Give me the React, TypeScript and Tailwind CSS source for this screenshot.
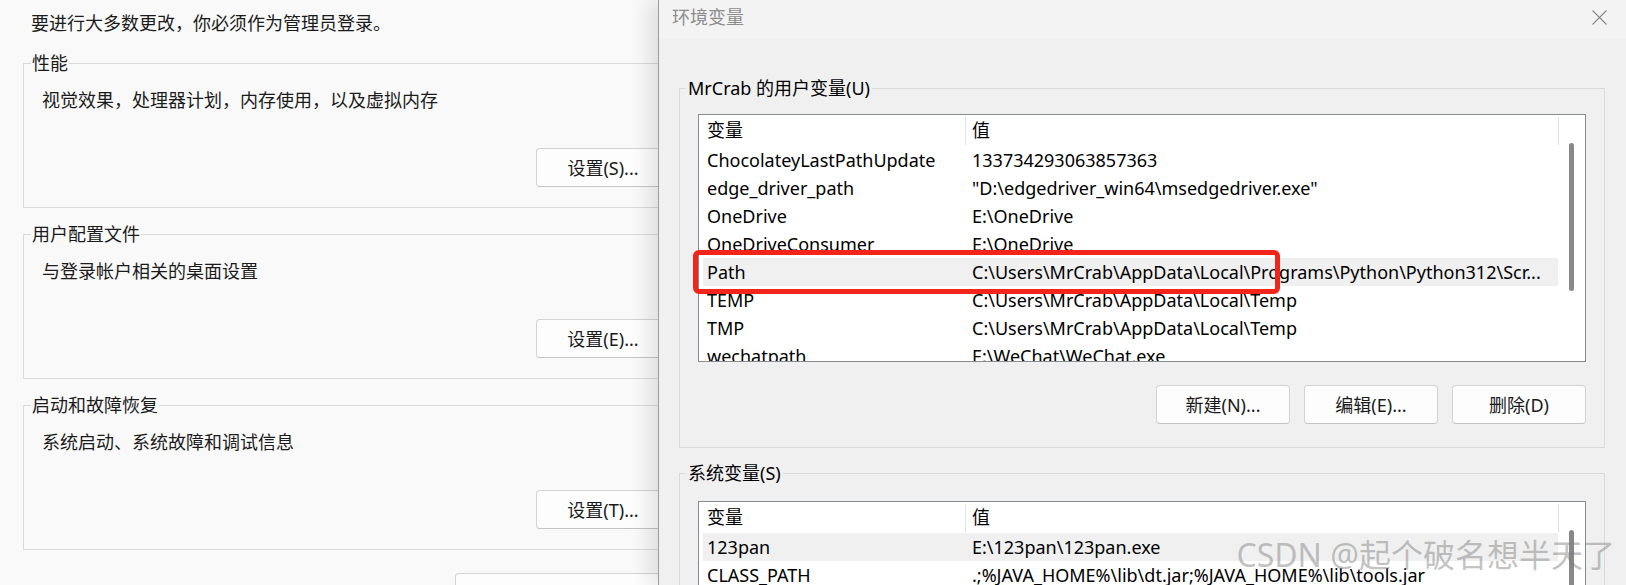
const userVars: [string, string][] = [
  ['ChocolateyLastPathUpdate', '133734293063857363'],
  ['edge_driver_path', '"D:\\edgedriver_win64\\msedgedriver.exe"'],
  ['OneDrive', 'E:\\OneDrive'],
  ['OneDriveConsumer', 'E:\\OneDrive'],
  ['Path', 'C:\\Users\\MrCrab\\AppData\\Local\\Programs\\Python\\Python312\\Scr...'],
  ['TEMP', 'C:\\Users\\MrCrab\\AppData\\Local\\Temp'],
  ['TMP', 'C:\\Users\\MrCrab\\AppData\\Local\\Temp'],
  ['wechatpath', 'E:\\WeChat\\WeChat.exe'],
];

const sysVars: [string, string][] = [
  ['123pan', 'E:\\123pan\\123pan.exe'],
  ['CLASS_PATH', '.;%JAVA_HOME%\\lib\\dt.jar;%JAVA_HOME%\\lib\\tools.jar'],
  ['ComSpec', 'C:\\Windows\\system32\\cmd.exe'],
  ['DriverData', 'C:\\Windows\\System32\\Drivers\\DriverData'],
];

function VarList({
  rows,
  selected,
  className,
  thumbClass,
}: {
  rows: [string, string][];
  selected: string;
  className: string;
  thumbClass: string;
}) {
  return (
    <div className={'ml-[12px] flex overflow-hidden border border-[#878b93] bg-white ' + className}>
      <div className="flex min-w-0 flex-1 flex-col">
        <div className="flex h-[31px] shrink-0 items-center">
          <div className="flex h-full w-[266px] items-center pl-[8px]">变量</div>
          <span className="h-[28px] w-px bg-[#e3e3e3]" />
          <div className="pl-[6px]">值</div>
        </div>
        {rows.map(([name, value]) => (
          <div
            key={name}
            className={
              'ml-[4px] flex h-[28px] shrink-0 items-center ' + (name === selected ? 'bg-[#f0f0f0]' : '')
            }
          >
            <div className="w-[262px] shrink-0 truncate pl-[4px]">{name}</div>
            <div className="min-w-0 flex-1 truncate pl-[7px]">{value}</div>
          </div>
        ))}
      </div>
      <div className="flex w-[27px] shrink-0 flex-col">
        <div className="flex h-[31px] items-center">
          <span className="h-[28px] w-px bg-[#e3e3e3]" />
        </div>
        <div className={'ml-[11px] w-[5px] rounded-full bg-[#888888] ' + thumbClass} />
      </div>
    </div>
  );
}

function WinButton({ children, className = '' }: { children?: React.ReactNode; className?: string }) {
  return (
    <button
      className={
        'h-[39px] w-[134px] shrink-0 rounded-[4px] border border-[#d3d3d3] border-b-[#c4c4c4] bg-[#fdfdfd] text-[18px] leading-[24px] text-[#1a1a1a] ' +
        className
      }
    >
      {children}
    </button>
  );
}

function LeftGroup({ title, desc, btn, className }: { title: string; desc: string; btn: string; className: string }) {
  return (
    <fieldset className={'ml-[23px] w-[663px] border border-[#dadada] pb-[20px] pl-[7px] pr-[15px] ' + className}>
      <legend className="px-[1px] leading-[24px]">{title}</legend>
      <div className="ml-[11px] mt-[13px] leading-[24px]">{desc}</div>
      <div className="mt-[36px] flex justify-end">
        <WinButton>{btn}</WinButton>
      </div>
    </fieldset>
  );
}

export default function App() {
  return (
    <div className="relative h-[585px] w-[1626px] overflow-hidden bg-[#f9f9f9] font-['Noto_Sans','Noto_Sans_CJK_SC',sans-serif] text-[18px] text-[#1b1b1b]">
      {/* system properties window underneath */}
      <div className="pt-[11px]">
        <p className="pl-[31px] leading-[24px]">要进行大多数更改，你必须作为管理员登录。</p>
        <LeftGroup className="mt-[16px]" title="性能" desc="视觉效果，处理器计划，内存使用，以及虚拟内存" btn="设置(S)..." />
        <LeftGroup className="mt-[14px]" title="用户配置文件" desc="与登录帐户相关的桌面设置" btn="设置(E)..." />
        <LeftGroup className="mt-[14px]" title="启动和故障恢复" desc="系统启动、系统故障和调试信息" btn="设置(T)..." />
        <WinButton className="ml-[455px] mt-[23px] w-[240px]" />
      </div>

      {/* environment variables dialog */}
      <div className="absolute left-[658px] top-0 flex h-[585px] w-[968px] flex-col border-l border-[#9c9c9c] bg-[#f0f0f0] text-black shadow-[-10px_0_18px_rgba(0,0,0,0.10)]">
        <div className="flex h-[39px] shrink-0 items-start justify-between bg-[#f3f3f3] pl-[13px] pr-[19px] pt-[5px]">
          <span className="leading-[24px] text-[#8c8c8c]">环境变量</span>
          <svg className="mt-[5px]" width="15" height="15" viewBox="0 0 15 15">
            <path d="M0.5 0.5L14.5 14.5M14.5 0.5L0.5 14.5" stroke="#8a8a8a" strokeWidth="1.1" />
          </svg>
        </div>

        <fieldset className="ml-[20px] mt-[37px] w-[926px] border border-[#dadada] pb-[23px] pl-[6px] pr-[18px]">
          <legend className="px-[2px] leading-[24px]">MrCrab 的用户变量(U)</legend>
          <VarList
            rows={userVars}
            selected="Path"
            className="mt-[14px] h-[248px]"
            thumbClass="mt-[-3px] h-[148px]"
          />
          <div className="mt-[23px] flex justify-end gap-[14px]">
            <WinButton>新建(N)...</WinButton>
            <WinButton>编辑(E)...</WinButton>
            <WinButton>删除(D)</WinButton>
          </div>
        </fieldset>

        <fieldset className="ml-[20px] mt-[13px] w-[926px] shrink-0 border border-[#dadada] pb-[23px] pl-[6px] pr-[18px]">
          <legend className="px-[2px] leading-[24px]">系统变量(S)</legend>
          <VarList rows={sysVars} selected="123pan" className="mt-[16px] h-[200px]" thumbClass="mt-[-3px] h-[120px]" />
        </fieldset>
      </div>

      {/* annotation */}
      <div className="absolute left-[693px] top-[250px] h-[44px] w-[587px] rounded-[6px] border-[5px] border-[#f3251b]" />
      <div className="absolute right-[11px] top-[533px] whitespace-nowrap text-[32px] leading-[44px] text-[rgba(120,120,120,0.45)]">
        CSDN @起个破名想半天了
      </div>
    </div>
  );
}
